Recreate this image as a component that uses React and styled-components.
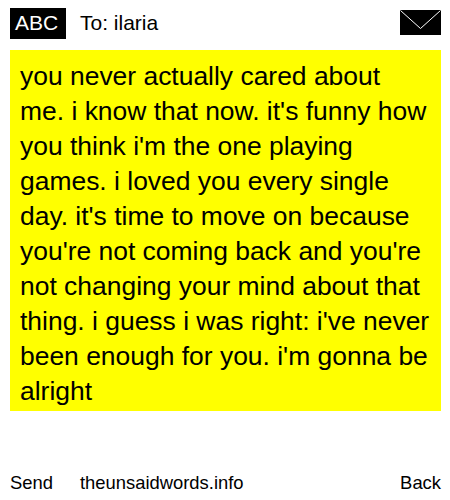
import React from "react";
import styled, { createGlobalStyle } from "styled-components";

const GlobalStyle = createGlobalStyle`
  html, body {
    margin: 0;
    padding: 0;
    background: #fff;
  }
  body {
    font-family: "Liberation Sans", Arial, sans-serif;
    color: #000;
  }
`;

const Page = styled.div`
  width: 450px;
  height: 500px;
  box-sizing: border-box;
  padding: 8px 9px 0 10px;
  display: flex;
  flex-direction: column;
  overflow: hidden;
`;

const Header = styled.div`
  height: 31px;
  display: flex;
  align-items: center;
`;

const Badge = styled.div`
  width: 56px;
  height: 31px;
  box-sizing: border-box;
  padding: 0 8px 1px 5px;
  background: #000;
  color: #fff;
  font-size: 21px;
  display: flex;
  align-items: center;
  justify-content: center;
`;

const Recipient = styled.div`
  margin-left: 14px;
  padding-bottom: 1px;
  font-size: 21px;
  flex-grow: 1;
`;

const Envelope = styled.svg`
  width: 41px;
  height: 25px;
  align-self: flex-start;
  margin-top: 2px;
`;

const Message = styled.div`
  margin-top: 11px;
  background: #ff0;
  padding: 9px 10px 3px;
  font-size: 26.45px;
  line-height: 35px;
  height: 361px;
  box-sizing: border-box;
`;

const Line = styled.div`
  white-space: nowrap;
`;

const Footer = styled.div`
  margin-top: 61px;
  display: flex;
  font-size: 18.4px;
  line-height: 22px;
`;

const Link = styled.span`
  margin-left: ${(props) => props.$gap || 0}px;
  margin-right: ${(props) => (props.$push ? "auto" : 0)};
`;

const lines = [
  "you never actually cared about",
  "me. i know that now. it's funny how",
  "you think i'm the one playing",
  "games. i loved you every single",
  "day. it's time to move on because",
  "you're not coming back and you're",
  "not changing your mind about that",
  "thing. i guess i was right: i've never",
  "been enough for you. i'm gonna be",
  "alright",
];

const App = () => {
  return (
    <>
      <GlobalStyle />
      <Page>
        <Header>
          <Badge>ABC</Badge>
          <Recipient>To: ilaria</Recipient>
          <Envelope viewBox="0 0 41 25">
            <rect width="41" height="25" fill="#000" />
            <path d="M0.5 0.5 L20.5 18.5 L40.5 0.5" fill="none" stroke="#fff" strokeWidth="1" />
          </Envelope>
        </Header>
        <Message>
          {lines.map((line) => (
            <Line key={line}>{line}</Line>
          ))}
        </Message>
        <Footer>
          <Link>Send</Link>
          <Link $gap={27} $push>theunsaidwords.info</Link>
          <Link>Back</Link>
        </Footer>
      </Page>
    </>
  );
};

export default App;
